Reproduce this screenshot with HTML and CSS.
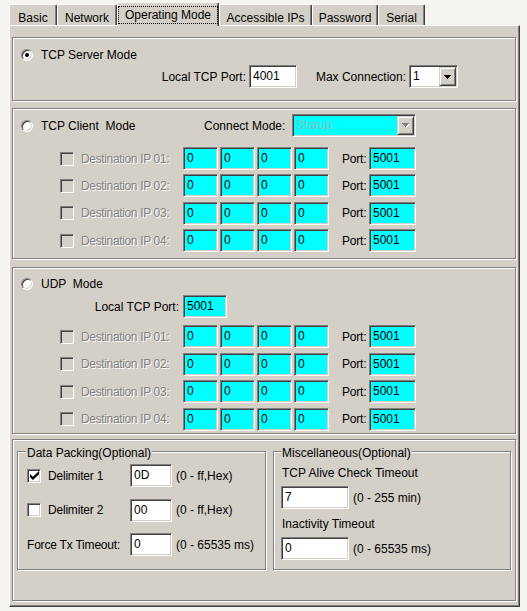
FILE: index.html
```html
<!DOCTYPE html>
<html lang="en">
<head>
<meta charset="utf-8">
<title>Operating Mode</title>
<link rel="stylesheet" href="styles.css">
</head>
<body>
<div class="dialog">
  <div class="tabs">
    <div class="tab w-basic">Basic</div>
    <div class="tab w-network">Network</div>
    <div class="tab tab-active w-opmode"><span class="focus">Operating Mode</span></div>
    <div class="tab w-ips">Accessible IPs</div>
    <div class="tab w-pass">Password</div>
    <div class="tab w-serial">Serial</div>
  </div>

  <div class="panel">
    <section class="box box-server">
      <div class="mode-row mt10"><span class="radio on"></span><span class="mode-text">TCP Server Mode</span></div>
      <div class="line mt3">
        <span class="lbl w-local1">Local TCP Port:</span>
        <span class="field ml3 w-port1">4001</span>
        <span class="lbl w-max">Max Connection:</span>
        <span class="combo w-combo1"><span class="combo-val">1</span><span class="combo-btn"><svg class="arrow" width="7" height="4" viewBox="0 0 7 4"><path d="M0 0h7v1h-1v1h-1v1h-1v1h-1v-1h-1v-1h-1v-1h-1z"/></svg></span></span>
      </div>
    </section>

    <section class="box box-client">
      <div class="client-head">
        <div class="mode-cell"><span class="radio"></span><span class="mode-text">TCP Client  Mode</span></div>
        <span class="lbl w-conn">Connect Mode:</span>
        <span class="combo combo-dis w-combo2"><span class="combo-val">Starup</span><span class="combo-btn"><svg class="arrow" width="8" height="5" viewBox="0 0 8 5"><path class="emboss" d="M1 1h7v1h-1v1h-1v1h-1v1h-1v-1h-1v-1h-1v-1h-1z"/><path class="grayed" d="M0 0h7v1h-1v1h-1v1h-1v1h-1v-1h-1v-1h-1v-1h-1z"/></svg></span></span>
      </div>
      <div class="dest-list client-list">
        <div class="dest-row"><span class="check dis-box"></span><span class="dlabel">Destination IP 01:</span><span class="field cyan ip">0</span><span class="field cyan ip">0</span><span class="field cyan ip">0</span><span class="field cyan ip">0</span><span class="lbl plabel">Port:</span><span class="field cyan pfield">5001</span></div>
        <div class="dest-row"><span class="check dis-box"></span><span class="dlabel">Destination IP 02:</span><span class="field cyan ip">0</span><span class="field cyan ip">0</span><span class="field cyan ip">0</span><span class="field cyan ip">0</span><span class="lbl plabel">Port:</span><span class="field cyan pfield">5001</span></div>
        <div class="dest-row"><span class="check dis-box"></span><span class="dlabel">Destination IP 03:</span><span class="field cyan ip">0</span><span class="field cyan ip">0</span><span class="field cyan ip">0</span><span class="field cyan ip">0</span><span class="lbl plabel">Port:</span><span class="field cyan pfield">5001</span></div>
        <div class="dest-row"><span class="check dis-box"></span><span class="dlabel">Destination IP 04:</span><span class="field cyan ip">0</span><span class="field cyan ip">0</span><span class="field cyan ip">0</span><span class="field cyan ip">0</span><span class="lbl plabel">Port:</span><span class="field cyan pfield">5001</span></div>
      </div>
    </section>

    <section class="box box-udp">
      <div class="mode-row mt8 h15"><span class="radio"></span><span class="mode-text">UDP  Mode</span></div>
      <div class="line mt4">
        <span class="lbl w-local2">Local TCP Port:</span>
        <span class="field cyan ml4 w-port2">5001</span>
      </div>
      <div class="dest-list udp-list">
        <div class="dest-row"><span class="check dis-box"></span><span class="dlabel">Destination IP 01:</span><span class="field cyan ip">0</span><span class="field cyan ip">0</span><span class="field cyan ip">0</span><span class="field cyan ip">0</span><span class="lbl plabel">Port:</span><span class="field cyan pfield">5001</span></div>
        <div class="dest-row"><span class="check dis-box"></span><span class="dlabel">Destination IP 02:</span><span class="field cyan ip">0</span><span class="field cyan ip">0</span><span class="field cyan ip">0</span><span class="field cyan ip">0</span><span class="lbl plabel">Port:</span><span class="field cyan pfield">5001</span></div>
        <div class="dest-row"><span class="check dis-box"></span><span class="dlabel">Destination IP 03:</span><span class="field cyan ip">0</span><span class="field cyan ip">0</span><span class="field cyan ip">0</span><span class="field cyan ip">0</span><span class="lbl plabel">Port:</span><span class="field cyan pfield">5001</span></div>
        <div class="dest-row"><span class="check dis-box"></span><span class="dlabel">Destination IP 04:</span><span class="field cyan ip">0</span><span class="field cyan ip">0</span><span class="field cyan ip">0</span><span class="field cyan ip">0</span><span class="lbl plabel">Port:</span><span class="field cyan pfield">5001</span></div>
      </div>
    </section>

    <section class="box box-opt">
      <div class="group group-pack">
        <span class="legend lg-pack">Data Packing(Optional)</span>
        <div class="pack-rows">
          <div class="pack-row">
            <span class="pack-cell"><span class="check"><svg class="tick" width="9" height="9" viewBox="0 0 7 7"><polygon points="0,2.3 2.3,4.4 7,0 7,2.6 2.3,7 0,4.9"/></svg></span><span class="ml7">Delimiter 1</span></span>
            <span class="field w-hex">0D</span><span class="hint">(0 - ff,Hex)</span>
          </div>
          <div class="pack-row">
            <span class="pack-cell"><span class="check"></span><span class="ml7">Delimiter 2</span></span>
            <span class="field w-hex">00</span><span class="hint">(0 - ff,Hex)</span>
          </div>
          <div class="pack-row">
            <span class="pack-cell">Force Tx Timeout:</span>
            <span class="field w-hex">0</span><span class="hint">(0 - 65535 ms)</span>
          </div>
        </div>
      </div>
      <div class="group group-misc">
        <span class="legend lg-misc">Miscellaneous(Optional)</span>
        <span class="misc-label mt6">TCP Alive Check Timeout</span>
        <div class="misc-row mt6"><span class="field w-misc">7</span><span class="hint ml6">(0 - 255 min)</span></div>
        <span class="misc-label mt8">Inactivity Timeout</span>
        <div class="misc-row mt6"><span class="field w-misc">0</span><span class="hint ml6">(0 - 65535 ms)</span></div>
      </div>
    </section>
  </div>
</div>
</body>
</html>
```

FILE: styles.css
```css
* { box-sizing: border-box; }
html, body { margin: 0; padding: 0; }
body {
  background: #f4f4f1;
  font-family: "Liberation Sans", Arial, sans-serif;
  font-size: 12px;
  line-height: 14px;
  color: #000;
}
.dialog { padding: 2px 0 0 9px; }

/* ---------- tabs ---------- */
.tabs {
  display: flex;
  align-items: flex-end;
  height: 24px;
  margin-bottom: -1px;
  position: relative;
  z-index: 1;
}
.tab {
  height: 21px;
  margin-bottom: 1px;
  padding-top: 7px;
  line-height: 12px;
  text-align: center;
  white-space: nowrap;
  background: #d4d0c8;
  border-left: 1px solid #fff;
  border-top: 1px solid #fff;
  border-right: 1px solid #404040;
  border-radius: 2px 2px 0 0;
  box-shadow: inset -1px 0 0 #808080;
}
.tab-active {
  height: 24px;
  margin-bottom: 0;
  padding-top: 3px;
}
.focus {
  display: block;
  height: 18px;
  line-height: 16px;
  border: 1px dotted #000;
}
.w-basic { width: 48px; }
.w-network { width: 60px; }
.w-opmode { width: 102px; }
.w-ips { width: 93px; }
.w-pass { width: 66px; }
.w-serial { width: 47px; }

/* ---------- panel ---------- */
.panel {
  position: relative;
  width: 511px;
  height: 582px;
  background: #d4d0c8;
  border-left: 1px solid #fff;
  border-top: 1px solid #fff;
  border-right: 1px solid #404040;
  border-bottom: 1px solid #404040;
  box-shadow: inset -1px -1px 0 #808080;
  padding: 11px 2px 0 2px;
  display: flex;
  flex-direction: column;
}
.box {
  width: 504px;
  border: 1px solid #808080;
  box-shadow: inset 1px 1px 0 #fff, 1px 1px 0 #fff;
  display: flex;
  flex-direction: column;
  flex-shrink: 0;
}
.box-server { height: 64px; margin-bottom: 7px; }
.box-client { height: 151px; margin-bottom: 8px; }
.box-udp { height: 167px; margin-bottom: 5px; }
.box-opt { height: 162px; flex-direction: row; padding: 11px 0 0 4px; }

/* ---------- common controls ---------- */
.mode-row {
  display: flex;
  align-items: center;
  height: 14px;
  padding-left: 8px;
}
.h15 { height: 15px; }
.mode-text { margin-left: 8px; white-space: pre; }
.line { display: flex; align-items: center; height: 23px; }
.lbl { white-space: nowrap; }

.radio {
  position: relative;
  width: 12px;
  height: 12px;
  flex-shrink: 0;
  border-radius: 50%;
  background: #fff;
  border: 1px solid;
  border-color: #808080 #fff #fff #808080;
  box-shadow: inset 1px 1px 0 #404040, inset -1px -1px 0 #d4d0c8;
}
.radio.on::after {
  content: "";
  position: absolute;
  left: 3px;
  top: 3px;
  width: 4px;
  height: 4px;
  border-radius: 50%;
  background: #000;
}

.check {
  width: 14px;
  height: 14px;
  flex-shrink: 0;
  background: #fff;
  border: 1px solid;
  border-color: #808080 #fff #fff #808080;
  box-shadow: inset 1px 1px 0 #404040, inset -1px -1px 0 #d4d0c8;
  display: flex;
  align-items: center;
  justify-content: center;
}
.check.dis-box { background: #d4d0c8; }
.tick { display: block; fill: #000; }

.field {
  height: 23px;
  flex-shrink: 0;
  background: #fff;
  border: 1px solid;
  border-color: #808080 #fff #fff #808080;
  box-shadow: inset 1px 1px 0 #404040, inset -1px -1px 0 #d4d0c8;
  padding-left: 3px;
  line-height: 21px;
  white-space: nowrap;
}
.field.cyan { background: #00ffff; }

.combo {
  display: flex;
  height: 23px;
  flex-shrink: 0;
  padding: 1px;
  background: #fff;
  border: 1px solid;
  border-color: #808080 #fff #fff #808080;
  box-shadow: inset 1px 1px 0 #404040, inset -1px -1px 0 #d4d0c8;
}
.combo-val { flex: 1; padding-left: 2px; line-height: 19px; }
.combo-btn {
  width: 17px;
  height: 19px;
  display: flex;
  align-items: center;
  justify-content: center;
  background: #d4d0c8;
  border: 1px solid;
  border-color: #d4d0c8 #404040 #404040 #d4d0c8;
  box-shadow: inset 1px 1px 0 #fff, inset -1px -1px 0 #808080;
}
.arrow { display: block; fill: #000; }
.combo-dis { background: #00ffff; }
.combo-dis .combo-val { color: #86bcbc; }
.arrow .emboss { fill: #fff; }
.arrow .grayed { fill: #808080; }

/* ---------- spacing helpers ---------- */
.mt3 { margin-top: 3px; }
.mt4 { margin-top: 4px; }
.mt6 { margin-top: 6px; }
.mt8 { margin-top: 8px; }
.mt10 { margin-top: 10px; }
.ml3 { margin-left: 3px; }
.ml4 { margin-left: 4px; }
.ml6 { margin-left: 6px; }
.ml7 { margin-left: 7px; }

/* ---------- TCP server ---------- */
.w-local1 { width: 233px; text-align: right; }
.w-port1 { width: 48px; }
.w-max { width: 92px; margin-left: 17px; text-align: right; }
.w-combo1 { width: 49px; margin-left: 3px; }

/* ---------- TCP client ---------- */
.client-head {
  display: flex;
  align-items: center;
  height: 23px;
  margin-top: 5px;
  padding-left: 8px;
}
.mode-cell { display: flex; align-items: center; width: 183px; flex-shrink: 0; }
.w-conn { width: 86px; }
.w-combo2 { width: 124px; margin-left: 2px; }

.dest-list { display: flex; flex-direction: column; }
.client-list { margin-top: 10px; gap: 4.4px; }
.udp-list { margin-top: 7px; gap: 4.67px; }
.dest-row {
  display: flex;
  align-items: center;
  height: 23px;
  padding-left: 47px;
}
.dlabel {
  width: 102px;
  flex-shrink: 0;
  margin-left: 7px;
  color: #808080;
  text-shadow: 1px 1px 0 #fff;
  letter-spacing: -0.35px;
  white-space: nowrap;
}
.ip { width: 35px; }
.ip + .ip { margin-left: 2px; }
.plabel { width: 24px; margin-left: 13px; letter-spacing: -0.2px; }
.pfield { width: 47px; margin-left: 3px; }

/* ---------- UDP ---------- */
.w-local2 { width: 166px; text-align: right; }
.w-port2 { width: 44px; }

/* ---------- optional groups ---------- */
.group {
  height: 119px;
  flex-shrink: 0;
  display: flex;
  flex-direction: column;
  align-items: flex-start;
  border: 1px solid #808080;
  box-shadow: inset 1px 1px 0 #fff, 1px 1px 0 #fff;
}
.group-pack { width: 249px; }
.group-misc { width: 238px; margin-left: 7px; }
.legend {
  margin-top: -6px;
  padding: 0 1px;
  background: #d4d0c8;
  line-height: 14px;
  white-space: nowrap;
}
.lg-pack { margin-left: 8px; }
.lg-misc { margin-left: 7px; }

.pack-rows {
  display: flex;
  flex-direction: column;
  gap: 11.5px;
  margin-top: 4px;
}
.pack-row {
  display: flex;
  align-items: center;
  height: 23px;
  padding-left: 9px;
}
.pack-cell {
  display: flex;
  align-items: center;
  width: 103px;
  flex-shrink: 0;
  white-space: nowrap;
  letter-spacing: -0.2px;
}
.w-hex { width: 42px; }
.hint { margin-left: 4px; white-space: nowrap; }

.misc-label { padding-left: 8px; line-height: 14px; white-space: nowrap; }
.misc-row { display: flex; align-items: center; height: 23px; padding-left: 7px; }
.w-misc { width: 68px; }
```
